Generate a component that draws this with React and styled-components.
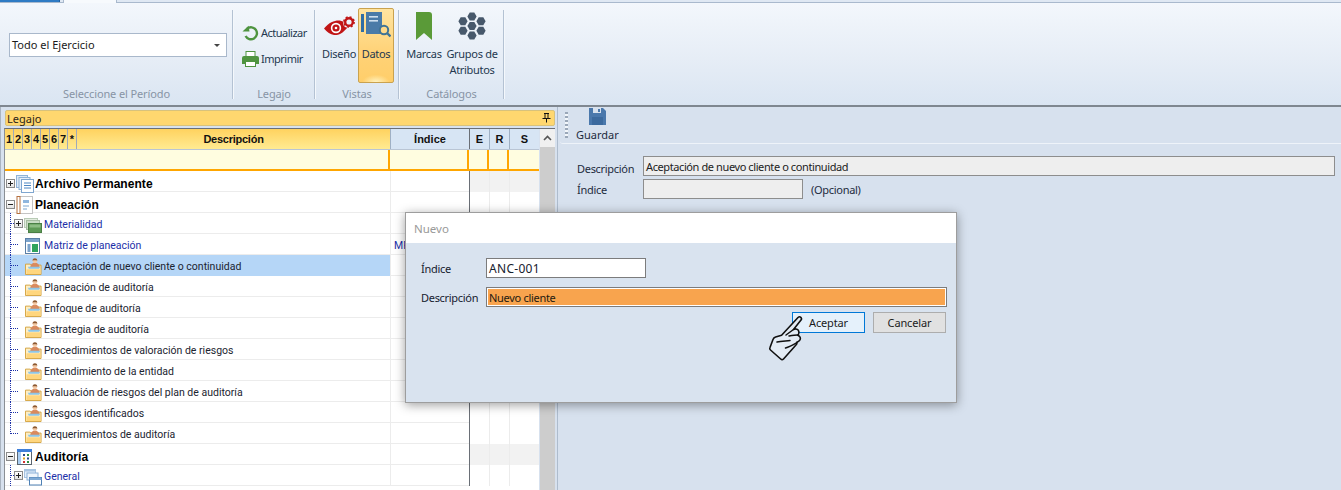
import React from 'react';
import styled, { createGlobalStyle } from 'styled-components';

const Global = createGlobalStyle`
  html, body { margin: 0; padding: 0; background: #d7e1ee; }
  * { box-sizing: border-box; }
`;

const Page = styled.div`
  position: relative; width: 1341px; height: 490px; overflow: hidden;
  display: flex; flex-direction: column; background: #d7e1ee;
  font-family: "Noto Sans", sans-serif; color: #1c2b3e;
`;

/* ---------- tab strip ---------- */
const TabStrip = styled.div`
  height: 3px; flex: none; display: flex; background: #dfe8f3; border-bottom: 1px solid #a9b9cd;
`;
const FileTab = styled.div`width: 60px; background: #2f7bc4; border-right: 1px solid #1f5f9f;`;
const ActiveTab = styled.div`width: 54px; margin-left: 3px; background: #f7fafd; border-left: 1px solid #a9b9cd; border-right: 1px solid #a9b9cd; margin-bottom: -1px;`;

/* ---------- ribbon ---------- */
const Ribbon = styled.div`
  height: 104px; flex: none; display: flex;
  background: linear-gradient(#f3f7fc 0%, #e6edf6 55%, #dae5f2 100%);
  border-bottom: 2px solid #7f8790;
`;
const Group = styled.div`
  width: ${p => p.$w}px; flex: none; display: flex; flex-direction: column; position: relative;
  &::after { content: ''; position: absolute; right: 0; top: 7px; bottom: 6px; width: 1px; background: #b4c2d3; box-shadow: 1px 0 0 #f4f8fc; }
`;
const GroupBody = styled.div`
  height: 83px; flex: none; display: flex;
`;
const GroupLabel = styled.div`
  height: 16px; font-size: 11px; line-height: 16px; letter-spacing: -0.12px; text-align: center; color: #8794a5;
`;
const Combo = styled.div`
  width: 218px; height: 24px; margin: 30px 0 0 9px; background: #fff; border: 1px solid #a9b8cb;
  display: flex; align-items: center; justify-content: space-between; padding: 0 6px 2px 2px;
  font-size: 11px; color: #1a1a1a;
`;
const ComboArrow = styled.span`
  width: 0; height: 0; margin-top: 2px; border-left: 3px solid transparent; border-right: 3px solid transparent; border-top: 3px solid #444;
`;
const SmallColumn = styled.div`
  display: flex; flex-direction: column; gap: 7px; padding: 20px 0 0 9px;
`;
const SmallBtn = styled.div`
  display: flex; align-items: center; gap: 2px; height: 19px; font-size: 11px; letter-spacing: -0.5px; color: #24384f;
`;
const BigBtn = styled.div`
  width: ${p => p.$w}px; margin-left: ${p => p.$ml || 0}px; height: 75px; margin-top: 5px; flex: none;
  display: flex; flex-direction: column; align-items: center; text-align: center; white-space: nowrap;
  font-size: 11px; line-height: 16px; letter-spacing: -0.3px; color: #24384f;
  border-radius: 2px; border: 1px solid transparent;
  ${p => p.$active && `
    border-color: #c9a24f;
    background: radial-gradient(ellipse 40% 10% at 50% 100%, #fff3c0 0%, transparent 100%), linear-gradient(#ffe4a0 0%, #ffd277 60%, #ffce6a 100%);
  `}
`;
const BigIcon = styled.div`
  height: 36px; flex: none; display: flex; align-items: flex-end; justify-content: center; margin-bottom: 1px; padding-bottom: ${p => p.$pb || 0}px;
`;

/* ---------- main split ---------- */
const Main = styled.div`flex: 1; display: flex; min-height: 0;`;
const LeftPanel = styled.div`
  width: 558px; flex: none; display: flex; flex-direction: column; padding: 3px 2px 0 3px;
  border-left: 1px solid #aab4c0; border-right: 1px solid #aebccd;
  background: #d7e1ee;
`;
const PanelBar = styled.div`
  height: 16px; flex: none; margin-left: 1px; background: #ffd76f; border: 1px solid #d8c27c; border-radius: 2px;
  display: flex; align-items: center; justify-content: space-between; padding: 0 3px 0 1px;
  font-size: 11px; color: #2c2418;
`;
const GridArea = styled.div`
  flex: 1; margin-top: 2px; display: flex; border-top: 1px solid #6b6f75; border-left: 1px solid #8a8f95; min-height: 0;
`;
const GridTable = styled.div`flex: 1; display: flex; flex-direction: column; background: #fff; min-width: 0;`;
const Columns = `grid-template-columns: 385px 79px 20px 20px 30px;`;
const HeaderRow = styled.div`
  display: grid; ${Columns} height: 21px; flex: none; border-bottom: 1px solid #b9c5d4;
`;
const HeadDesc = styled.div`
  display: grid; grid-template-columns: repeat(7, 9px) 9px 1fr; height: 100%;
  background: linear-gradient(#ffd25f, #ffeb92);
`;
const HeadNum = styled.div`
  display: flex; align-items: center; justify-content: center; height: 100%;
  border-right: 1px solid #9fa9b8; font: bold 11px "Liberation Sans", sans-serif; color: #111;
`;
const HeadTitle = styled.div`
  display: flex; align-items: center; justify-content: center; height: 100%;
  font: bold 11px "Liberation Sans", sans-serif; letter-spacing: -0.25px; color: #111;
`;
const HeadCell = styled.div`
  display: flex; align-items: center; justify-content: center; height: 100%; background: #d7e5f4;
  border-left: 1px solid ${p => p.$dark ? '#6a6f76' : '#9fb0c4'};
  font: bold 11px "Liberation Sans", sans-serif; color: #111;
`;
const FilterRow = styled.div`
  display: grid; ${Columns} height: 21px; flex: none; background: #fffde0;
  border-bottom: 2px solid #ffa600;
`;
const FilterCell = styled.div`
  height: 100%; border-right: 2px solid ${p => p.$none ? 'transparent' : '#ffa600'};
`;
const Row = styled.div`
  display: grid; ${Columns} height: 21px; flex: none;
  border-bottom: 1px solid #ececec;
`;
const DescCell = styled.div`
  display: flex; align-items: center; height: 21px; min-width: 0;
  padding-top: ${p => p.$root ? 4 : 2}px;
  background: ${p => p.$sel ? '#b5d6f7' : 'transparent'};
  font: ${p => p.$root ? `bold 12px "Liberation Sans"` : `10.5px "Roboto"`}, sans-serif;
  letter-spacing: ${p => p.$root ? '0.05px' : '0'};
  color: ${p => p.$root ? '#000' : p.$blue ? '#1c2fa8' : '#1b2430'};
`;
const IndexCell = styled.div`
  display: flex; align-items: center; padding: 2px 0 0 3px; border-left: 1px solid #ececec;
  font: 10.5px "Roboto", sans-serif; color: #1c2fa8;
`;
const FlagCell = styled.div`
  border-left: 1px solid ${p => p.$dark ? '#6a6f76' : '#ececec'};
  background: ${p => p.$gray ? '#f2f2f2' : '#fff'};
`;
const Guide = styled.span`
  flex: none; width: 19px; height: 21px; margin-top: -2px; background-repeat: no-repeat;
  background-image: repeating-linear-gradient(to bottom, #1c2fa8 0 1px, transparent 1px 2px), repeating-linear-gradient(to right, #1c2fa8 0 1px, transparent 1px 2px);
  background-size: 1px ${p => p.$last ? '11px' : '21px'}, 7px 1px;
  background-position: 5px 0, 6px 10px;
`;
const Expander = styled.span`
  flex: none; width: 9px; height: 9px; margin: ${p => p.$m || '0'};
  border: 1px solid #8b8b8b; background: linear-gradient(#fff, #e4e4e4); position: relative;
  &::before { content: ''; position: absolute; left: 1px; right: 1px; top: 3px; height: 1px; background: #222; }
  ${p => p.$plus && `&::after { content: ''; position: absolute; top: 1px; bottom: 1px; left: 3px; width: 1px; background: #222; }`}
`;
const BranchGuide = styled.span`
  flex: none; width: 19px; height: 21px; margin-top: -2px; display: flex; align-items: center; padding-left: 9px;
  background-repeat: no-repeat;
  background-image: repeating-linear-gradient(to bottom, #1c2fa8 0 1px, transparent 1px 2px), repeating-linear-gradient(to right, #1c2fa8 0 1px, transparent 1px 2px);
  background-size: 1px 21px, 4px 1px;
  background-position: 5px 0, 6px 10px;
`;
const TreeIcon = styled.span`
  flex: none; width: 18px; height: 18px; margin-right: ${p => p.$mr ?? 2}px; display: flex; align-items: center; justify-content: center;
`;
const Scroll = styled.div`
  width: 15px; margin-left: 1px; flex: none; display: flex; flex-direction: column; background: #f0f0f0;
`;
const ScrollBtn = styled.div`
  height: 18px; flex: none; display: flex; align-items: center; justify-content: center;
`;
const ScrollThumb = styled.div`flex: 1; background: #cdcdcd;`;

/* ---------- right panel ---------- */
const RightPanel = styled.div`flex: 1; display: flex; flex-direction: column; min-width: 0; padding-left: 2px; background: #d7e1ee;`;
const Toolbar = styled.div`
  height: 37px; flex: none; display: flex; border-bottom: 1px solid #eef3f9; border-radius: 0 0 0 3px;
`;
const Grip = styled.div`
  width: 3px; margin: 5px 0 5px 5px; flex: none;
  background: repeating-linear-gradient(to bottom, #9aa7b8 0 2px, #f2f6fa 2px 4px);
`;
const ToolBtn = styled.div`
  margin-left: 8px; display: flex; flex-direction: column; align-items: center; padding-top: 1px; gap: 2px;
  font-size: 11px; line-height: 16px; color: #1d2b3d;
`;
const Form = styled.div`
  display: grid; grid-template-columns: 66px auto; row-gap: 3px; padding: 12px 6px 0 17px;
  align-items: center; font-size: 11px; letter-spacing: -0.3px; color: #1d2b3d;
`;
const FormLabel = styled.span`padding-top: ${p => p.$pt || 0}px;`;
const FormLine = styled.div`display: flex; align-items: center; gap: 8px;`;
const ReadInput = styled.div`
  height: 20px; width: ${p => p.$w ? `${p.$w}px` : '100%'}; background: #eeeeee; border: 1px solid #8d8d8d;
  display: flex; align-items: center; padding-left: 2px; font-size: 11px; letter-spacing: -0.4px; color: #222;
`;

/* ---------- dialog ---------- */
const Dialog = styled.div`
  position: absolute; left: 405px; top: 212px; width: 552px; height: 191px;
  background: #d9e3ef; border: 1px solid #9d9d9d; box-shadow: 0 2px 10px rgba(0,0,0,.38);
  display: flex; flex-direction: column;
`;
const DialogTitle = styled.div`
  height: 30px; flex: none; background: #fff; padding-left: 8px; display: flex; align-items: center;
  font-size: 11.5px; color: #999;
`;
const DialogBody = styled.div`
  flex: 1; display: grid; grid-template-columns: 65px 461px; row-gap: 9px; padding: 15px 0 0 15px;
  grid-auto-rows: 20px; align-items: center; font-size: 11px; letter-spacing: -0.3px; color: #16202e;
`;
const TextField = styled.div`
  height: 20px; width: ${p => p.$w ? `${p.$w}px` : '100%'}; border: 1px solid #7c7c7c; background: #fff;
  display: flex; align-items: center; padding-left: 2px; font-size: 12px; color: #16202e; letter-spacing: 0.3px;
`;
const SelectedField = styled(TextField)`
  background: #f8a44e; box-shadow: inset 0 0 0 1px #fff; color: #241a10; width: 461px;
  font-size: 11px; letter-spacing: -0.3px;
`;
const Buttons = styled.div`
  grid-column: 1 / 3; display: flex; justify-content: flex-end; gap: 8px; margin-top: -7px; width: 525px;
`;
const Button = styled.div`
  width: 73px; height: 21px; display: flex; align-items: center; justify-content: center;
  font-size: 11px; letter-spacing: -0.15px; color: #1b1b1b;
  background: ${p => p.$primary ? '#e5f1fb' : '#e1e1e1'};
  border: 1px solid ${p => p.$primary ? '#0078d7' : '#adadad'};
`;
const HandWrap = styled.div`position: absolute; left: 769px; top: 313px; width: 34px; height: 48px;`;

/* ---------- icons ---------- */
const Refresh = () => (
  <svg width="17" height="16" viewBox="0 0 17 16">
    <path d="M5.2 3.6A6 6 0 1 1 3.6 11" fill="none" stroke="#4f9440" strokeWidth="2.4" />
    <path d="M0.5 6.5 L7.5 6.5 L6.6 0.8 Z" fill="#4f9440" />
  </svg>
);
const Printer = () => (
  <svg width="17" height="16" viewBox="0 0 17 16">
    <rect x="4" y="0.5" width="9" height="5" fill="#fff" stroke="#4f9440" />
    <path d="M2 5h13a2 2 0 0 1 2 2v6h-3v-2H3v2H0V7a2 2 0 0 1 2-2z" fill="#4f9440" />
    <rect x="3.5" y="10.5" width="10" height="5" fill="#fff" stroke="#4f9440" />
  </svg>
);
const EyeGear = () => (
  <svg width="31" height="22" viewBox="0 0 31 22">
    <path d="M0 12.5C5 6.5 10 4.5 14.5 4.5c2 0 3.5.5 5 1.5-.5 1-.5 3 .5 4 1 1.2 2.3 1.7 3.3 1.7C18.500 17.500 14 19.500 10 19 6.500 18.500 3 16 0 12.500z" fill="#c11516" />
    <circle cx="12" cy="12" r="5.2" fill="#fff" />
    <circle cx="12" cy="12" r="3.6" fill="#c11516" />
    <circle cx="12" cy="12" r="1.3" fill="#fff" />
    <circle cx="25" cy="6" r="3.8" fill="none" stroke="#c11516" strokeWidth="2.4" />
    <circle cx="25" cy="6" r="5.1" fill="none" stroke="#c11516" strokeWidth="1.6" strokeDasharray="2 2" />
  </svg>
);
const DataBook = () => (
  <svg width="30" height="26" viewBox="0 0 30 26">
    <rect x="0" y="2" width="3" height="18" fill="#2f6ea6" />
    <path d="M5 0h16v22H5z" fill="#4a7ba8" />
    <rect x="8" y="4" width="9" height="1.6" fill="#cfe0ef" />
    <rect x="8" y="8" width="9" height="1.6" fill="#cfe0ef" />
    <circle cx="23" cy="18" r="4.2" fill="#ffd98a" stroke="#3f7396" strokeWidth="2" />
    <path d="M26 21l3.500 3.500" stroke="#3f7396" strokeWidth="2.4" />
  </svg>
);
const Bookmark = () => (
  <svg width="18" height="28" viewBox="0 0 18 28">
    <path d="M1 0h13a3 3 0 0 1 3 3v25l-8-7-8 7z" fill="#5a9a38" />
  </svg>
);
const Hexes = () => {
  const r = 4.6;
  const hex = (x, y) => `M${x - r / 2} ${y - r * 0.87}h${r}l${r / 2} ${r * 0.87}-${r / 2} ${r * 0.87}h-${r}l-${r / 2}-${r * 0.87}z`;
  return (
    <svg width="28" height="28" viewBox="0 0 28 28">
      {[[14, 4.4], [5, 9.2], [23, 9.2], [14, 14], [5, 18.8], [23, 18.8], [14, 23.6]].map(([x, y]) => (
        <path key={`${x}-${y}`} d={hex(x, y)} fill="#47586b" />
      ))}
    </svg>
  );
};
const Pin = () => (
  <svg width="9" height="10" viewBox="0 0 9 10">
    <path d="M2 0.5h5M3 0.5v5M6 0.5v5M0.5 5.5h8M4.5 5.5v4" stroke="#111" fill="none" />
  </svg>
);
const ChevUp = () => (
  <svg width="9" height="6" viewBox="0 0 9 6"><path d="M1 5l3.500-3.500L8 5" fill="none" stroke="#555" strokeWidth="1.6" /></svg>
);
const Floppy = () => (
  <svg width="17" height="17" viewBox="0 0 17 17">
    <path d="M0 0h14l3 3v14H0z" fill="#4a78ac" />
    <rect x="4" y="0" width="8" height="5" fill="#d7e1ee" />
    <rect x="9" y="1" width="2" height="3" fill="#4a78ac" />
    <rect x="3" y="9" width="11" height="8" fill="#3c6a9e" />
  </svg>
);
const PagesIcon = () => (
  <svg width="18" height="18" viewBox="0 0 18 18">
    <rect x="0.5" y="0.5" width="11" height="12" fill="#dce9f7" stroke="#8fb3d8" />
    <rect x="3" y="2.500" width="11" height="12" fill="#e7f0fa" stroke="#8fb3d8" />
    <rect x="5.500" y="4.500" width="12" height="13" fill="#fff" stroke="#7fa6cf" />
    <path d="M8 8h7M8 10.500h7M8 13h7" stroke="#4d86c2" />
  </svg>
);
const NotebookIcon = () => (
  <svg width="18" height="18" viewBox="0 0 18 18">
    <rect x="2.500" y="0.500" width="14" height="17" fill="#fff" stroke="#c4c4c4" />
    <rect x="1" y="0.500" width="3" height="17" fill="#fff" stroke="#b5703e" />
    <path d="M7 4h6v3H7z" fill="#8fb6de" />
    <path d="M7 10h6M7 13h4" stroke="#7da6d0" />
  </svg>
);
const GreenStack = () => (
  <svg width="18" height="18" viewBox="0 0 18 18">
    <rect x="0.500" y="2.500" width="13" height="9" fill="#e3ede0" stroke="#b9cbb6" />
    <rect x="2.500" y="4.500" width="13" height="9" fill="#c9dcc4" stroke="#a5bca0" />
    <rect x="4.500" y="7.500" width="13" height="9" fill="#5e9a56" stroke="#4a7f45" />
    <rect x="5.500" y="8.500" width="11" height="3" fill="#8dbd84" />
  </svg>
);
const MatrixIcon = () => (
  <svg width="18" height="18" viewBox="0 0 18 18">
    <rect x="1.500" y="1.500" width="14" height="15" fill="#fff" stroke="#5b7fa6" />
    <rect x="2" y="2" width="13" height="3" fill="#7ba3cc" />
    <rect x="3.500" y="7" width="3" height="8" fill="#7ba3cc" />
    <rect x="8" y="7" width="6" height="8" fill="#2fa35c" />
  </svg>
);
const PersonFolder = () => (
  <svg width="17" height="17" viewBox="0 0 18 18">
    <path d="M0.500 6.500h5l1 1h10.500v10H0.500z" fill="#fdeec5" stroke="#d3a23d" />
    <path d="M1.500 12h15v5h-15z" fill="#ffd67e" />
    <path d="M5.500 10c0-3.200 2.200-5 5-5s5 1.800 5 5z" fill="#d98a5e" />
    <circle cx="10.500" cy="3" r="2.500" fill="#f3c9a5" />
    <path d="M8 2.800C8 1 9.300 0.200 10.500 0.200S13 1 13 2.800c-1-.7-4-.7-5 0z" fill="#8c5a33" />
    <path d="M3 9.200h13l-1 2.300H4z" fill="#8dc6e8" />
  </svg>
);
const TableIcon = () => (
  <svg width="16" height="16" viewBox="0 0 16 16">
    <rect x="0.500" y="0.500" width="14" height="15" fill="#fff" stroke="#5a6570" />
    <rect x="0" y="0" width="15" height="3" fill="#3f7fd8" />
    <rect x="1" y="3" width="3" height="12" fill="#a9cdf2" />
    <rect x="6" y="5" width="2" height="2" fill="#274a8a" /><rect x="10" y="5" width="2" height="2" fill="#2a8f3e" />
    <rect x="6" y="8.500" width="2" height="2" fill="#d9a520" /><rect x="10" y="8.500" width="2" height="2" fill="#274a8a" />
    <rect x="6" y="12" width="2" height="2" fill="#d03030" /><rect x="10" y="12" width="2" height="2" fill="#2a8f3e" />
  </svg>
);
const WindowsIcon = () => (
  <svg width="18" height="18" viewBox="0 0 18 18">
    <rect x="0.500" y="1.500" width="11" height="8" fill="#e3effb" stroke="#a7c4e2" />
    <rect x="0.500" y="1.500" width="11" height="2" fill="#a7c4e2" />
    <rect x="3" y="5" width="11" height="7" fill="#eef5fc" stroke="#8db2d8" />
    <rect x="5.500" y="9.500" width="12" height="7.500" fill="#fff" stroke="#4f81b5" />
    <rect x="5.500" y="9.500" width="12" height="2.500" fill="#7ea9d4" />
  </svg>
);
const Hand = () => (
  <svg width="34" height="48" viewBox="0 0 34 48">
    <path
      d="M29 4.500c2-1.800 4.500.4 3 2.600L24.500 16.500c2.500-1 4.800-.4 5.300 2 .3 1.600 0 2.800-1 3.700 2.300.8 3.200 3 2 5-.7 1.200-1.800 1.800-3 2 .4 1.300-.2 2.500-1.500 3.500L14.500 46c-.9.800-1.900.8-2.800 0L1.500 37c-.8-.7-.9-1.600-.5-2.500l3-8c.5-1.300 1.300-2 2.600-2.400l6-1.800z"
      fill="#e4ecf5" stroke="#111" strokeWidth="1.6" strokeLinejoin="round"
    />
    <path d="M8 29c4-.8 9-1 13-1.500M16.500 35c4-1.200 8-3.500 11.500-5.500M20 23c3-.5 6-1 8.500-1M24.500 16.500 17 22" fill="none" stroke="#111" strokeWidth="1.500" strokeLinecap="round" />
  </svg>
);

const planning = [
  'Aceptación de nuevo cliente o continuidad',
  'Planeación de auditoría',
  'Enfoque de auditoría',
  'Estrategia de auditoría',
  'Procedimientos de valoración de riesgos',
  'Entendimiento de la entidad',
  'Evaluación de riesgos del plan de auditoría',
  'Riesgos identificados',
  'Requerimientos de auditoría',
];

const GridRow = ({ children, sel, root, blue, gray, index }) => (
  <Row>
    <DescCell $sel={sel} $root={root} $blue={blue}>{children}</DescCell>
    <IndexCell>{index}</IndexCell>
    <FlagCell $dark $gray={gray} />
    <FlagCell $gray={gray} />
    <FlagCell $gray={gray} />
  </Row>
);

export default function App() {
  return (
    <Page>
      <Global />
      <TabStrip><FileTab /><ActiveTab /></TabStrip>
      <Ribbon>
        <Group $w={233}>
          <GroupBody>
            <Combo>Todo el Ejercicio<ComboArrow /></Combo>
          </GroupBody>
          <GroupLabel>Seleccione el Período</GroupLabel>
        </Group>
        <Group $w={82}>
          <GroupBody>
            <SmallColumn>
              <SmallBtn><Refresh />Actualizar</SmallBtn>
              <SmallBtn><Printer />Imprimir</SmallBtn>
            </SmallColumn>
          </GroupBody>
          <GroupLabel>Legajo</GroupLabel>
        </Group>
        <Group $w={84}>
          <GroupBody>
            <BigBtn $w={36} $ml={6}><BigIcon $pb={7}><EyeGear /></BigIcon>Diseño</BigBtn>
            <BigBtn $w={36} $ml={1} $active><BigIcon $pb={7}><DataBook /></BigIcon>Datos</BigBtn>
          </GroupBody>
          <GroupLabel>Vistas</GroupLabel>
        </Group>
        <Group $w={105}>
          <GroupBody>
            <BigBtn $w={40} $ml={5}><BigIcon $pb={5}><Bookmark /></BigIcon>Marcas</BigBtn>
            <BigBtn $w={54} $ml={1}><BigIcon $pb={5}><Hexes /></BigIcon>Grupos de<br />Atributos</BigBtn>
          </GroupBody>
          <GroupLabel>Catálogos</GroupLabel>
        </Group>
      </Ribbon>

      <Main>
        <LeftPanel>
          <PanelBar>Legajo<Pin /></PanelBar>
          <GridArea>
            <GridTable>
              <HeaderRow>
                <HeadDesc>
                  {['1', '2', '3', '4', '5', '6', '7', '*'].map(n => <HeadNum key={n}>{n}</HeadNum>)}
                  <HeadTitle>Descripción</HeadTitle>
                </HeadDesc>
                <HeadCell>Índice</HeadCell>
                <HeadCell $dark>E</HeadCell>
                <HeadCell>R</HeadCell>
                <HeadCell>S</HeadCell>
              </HeaderRow>
              <FilterRow>
                <FilterCell />
                <FilterCell />
                <FilterCell />
                <FilterCell />
                <FilterCell $none />
              </FilterRow>
              <GridRow root gray>
                <Expander $plus $m="0 1px 0 1px" />
                <TreeIcon $mr={1}><PagesIcon /></TreeIcon>Archivo Permanente
              </GridRow>
              <GridRow root>
                <Expander $m="0 1px 0 1px" />
                <TreeIcon $mr={1}><NotebookIcon /></TreeIcon>Planeación
              </GridRow>
              <GridRow blue>
                <BranchGuide><Expander $plus /></BranchGuide>
                <TreeIcon><GreenStack /></TreeIcon>Materialidad
              </GridRow>
              <GridRow blue index="MP-001">
                <Guide />
                <TreeIcon><MatrixIcon /></TreeIcon>Matriz de planeación
              </GridRow>
              {planning.map((t, i) => (
                <GridRow key={t} sel={i === 0}>
                  <Guide $last={i === planning.length - 1} />
                  <TreeIcon><PersonFolder /></TreeIcon>{t}
                </GridRow>
              ))}
              <GridRow root gray>
                <Expander $m="0 1px 0 1px" />
                <TreeIcon $mr={1}><TableIcon /></TreeIcon>Auditoría
              </GridRow>
              <GridRow blue>
                <BranchGuide><Expander $plus /></BranchGuide>
                <TreeIcon><WindowsIcon /></TreeIcon>General
              </GridRow>
            </GridTable>
            <Scroll>
              <ScrollBtn><ChevUp /></ScrollBtn>
              <ScrollThumb />
            </Scroll>
          </GridArea>
        </LeftPanel>

        <RightPanel>
          <Toolbar>
            <Grip />
            <ToolBtn><Floppy />Guardar</ToolBtn>
          </Toolbar>
          <Form>
            <FormLabel $pt={5}>Descripción</FormLabel>
            <ReadInput>Aceptación de nuevo cliente o continuidad</ReadInput>
            <FormLabel>Índice</FormLabel>
            <FormLine><ReadInput $w={160} /><span>(Opcional)</span></FormLine>
          </Form>
        </RightPanel>
      </Main>

      <Dialog>
        <DialogTitle>Nuevo</DialogTitle>
        <DialogBody>
          <span>Índice</span>
          <TextField $w={160}>ANC-001</TextField>
          <span>Descripción</span>
          <SelectedField>Nuevo cliente</SelectedField>
          <Buttons>
            <Button $primary>Aceptar</Button>
            <Button>Cancelar</Button>
          </Buttons>
        </DialogBody>
      </Dialog>
      <HandWrap><Hand /></HandWrap>
    </Page>
  );
}
